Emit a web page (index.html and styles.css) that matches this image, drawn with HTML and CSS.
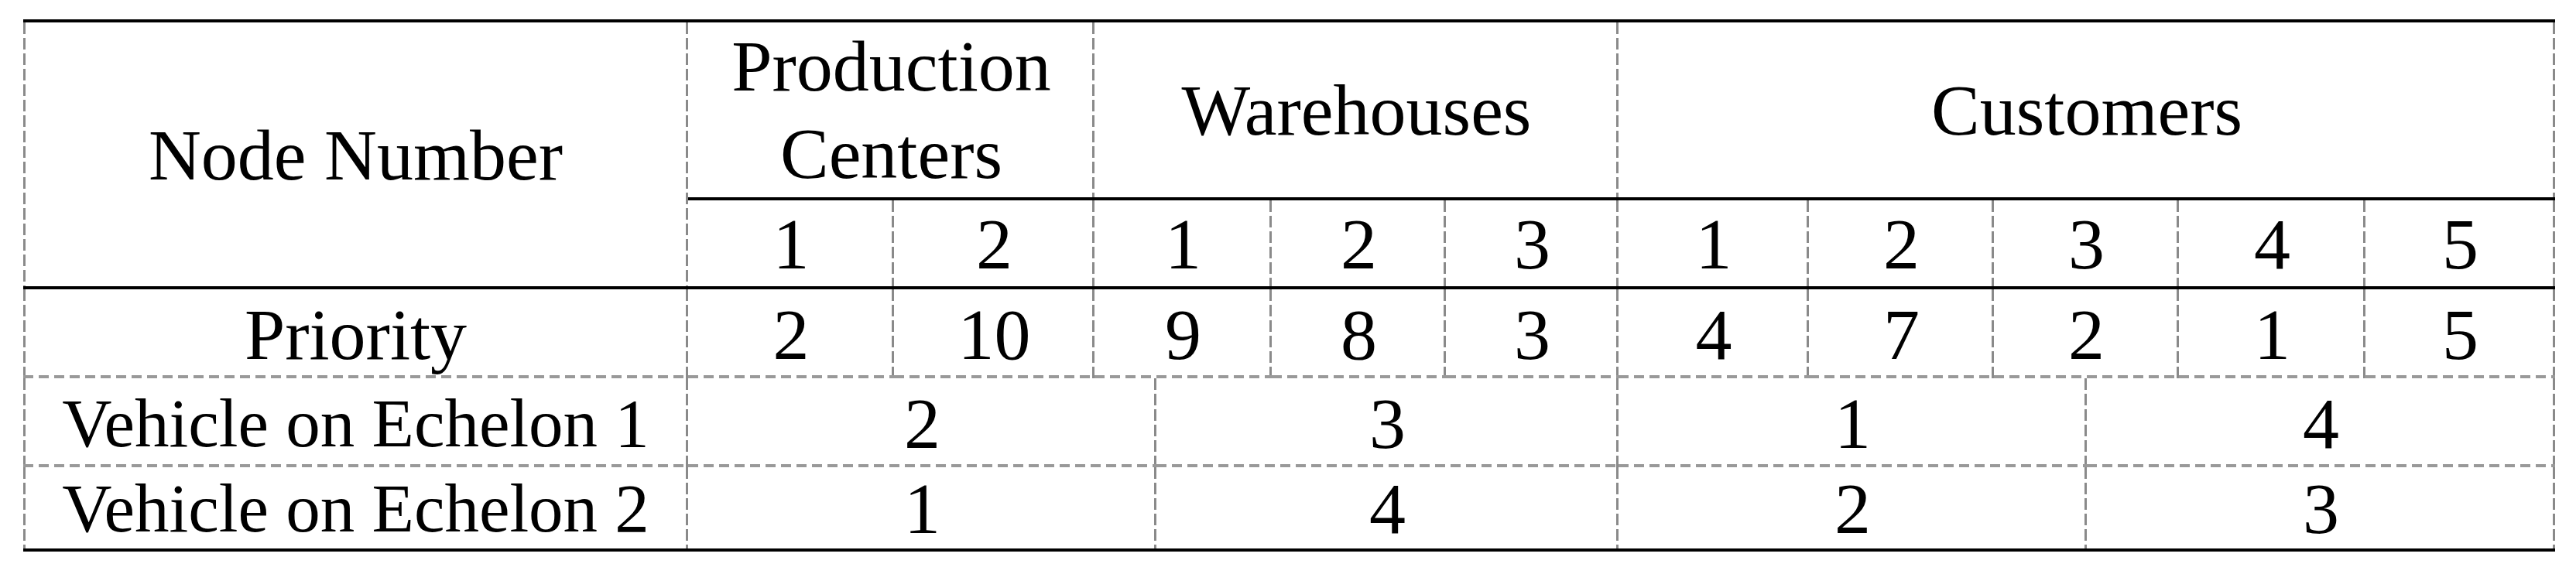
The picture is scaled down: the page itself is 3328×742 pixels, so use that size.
FILE: index.html
```html
<!DOCTYPE html>
<html lang="en">
<head>
<meta charset="utf-8">
<title>Node priorities and vehicles</title>
<link rel="stylesheet" href="styles.css">
</head>
<body>
<table class="grid">
  <colgroup>
    <col class="c-label">
    <col class="c-pc1">
    <col class="c-pc2">
    <col class="c-w1a">
    <col class="c-w1b">
    <col class="c-w2">
    <col class="c-w3">
    <col class="c-cu1">
    <col class="c-cu2">
    <col class="c-cu3a">
    <col class="c-cu3b">
    <col class="c-cu4">
    <col class="c-cu5">
  </colgroup>
  <tbody>
    <tr class="r-group">
      <td class="label head-bottom" rowspan="2">Node Number</td>
      <td class="group two-line" colspan="2">Production<br>Centers</td>
      <td class="group" colspan="4">Warehouses</td>
      <td class="group" colspan="6">Customers</td>
    </tr>
    <tr class="r-sub">
      <td class="head-bottom">1</td>
      <td class="head-bottom">2</td>
      <td class="head-bottom" colspan="2">1</td>
      <td class="head-bottom">2</td>
      <td class="head-bottom">3</td>
      <td class="head-bottom">1</td>
      <td class="head-bottom">2</td>
      <td class="head-bottom" colspan="2">3</td>
      <td class="head-bottom">4</td>
      <td class="head-bottom">5</td>
    </tr>
    <tr class="r-data">
      <td class="label row-sep">Priority</td>
      <td class="row-sep">2</td>
      <td class="row-sep">10</td>
      <td class="row-sep" colspan="2">9</td>
      <td class="row-sep">8</td>
      <td class="row-sep">3</td>
      <td class="row-sep">4</td>
      <td class="row-sep">7</td>
      <td class="row-sep" colspan="2">2</td>
      <td class="row-sep">1</td>
      <td class="row-sep">5</td>
    </tr>
    <tr class="r-data">
      <td class="label vehicle row-sep">Vehicle on Echelon 1</td>
      <td class="row-sep" colspan="3">2</td>
      <td class="row-sep" colspan="3">3</td>
      <td class="row-sep" colspan="3">1</td>
      <td class="row-sep" colspan="3">4</td>
    </tr>
    <tr class="r-last">
      <td class="label vehicle">Vehicle on Echelon 2</td>
      <td colspan="3">1</td>
      <td colspan="3">4</td>
      <td colspan="3">2</td>
      <td colspan="3">3</td>
    </tr>
  </tbody>
</table>
</body>
</html>
```
FILE: styles.css
```css
html, body {
  margin: 0;
  padding: 0;
  background: #ffffff;
}

body {
  font-family: "Liberation Serif", "Times New Roman", serif;
  color: #000000;
}

.grid {
  border-collapse: separate;
  border-spacing: 0;
  table-layout: fixed;
  width: 3271px;
  margin: 25px 0 0 30px;
  border-top: 4px solid #000000;
  border-bottom: 4px solid #000000;
}

.c-label { width: 859px; }
.c-pc1 { width: 266px; }
.c-pc2 { width: 259px; }
.c-w1a { width: 80px; }
.c-w1b { width: 149px; }
.c-w2 { width: 225px; }
.c-w3 { width: 223px; }
.c-cu1 { width: 246px; }
.c-cu2 { width: 239px; }
.c-cu3a { width: 120px; }
.c-cu3b { width: 119px; }
.c-cu4 { width: 241px; }
.c-cu5 { width: 245px; }

.grid td {
  padding: 0;
  border: 0;
  text-align: center;
  vertical-align: middle;
  font-size: 94px;
  line-height: 100px;
  white-space: nowrap;
  background-image: repeating-linear-gradient(to bottom, #8a8a8a 0 15px, transparent 15px 20px);
  background-position: right top;
  background-size: 3px 100%;
  background-repeat: no-repeat;
}

.grid td.label {
  background-image:
    repeating-linear-gradient(to bottom, #8a8a8a 0 15px, transparent 15px 20px),
    repeating-linear-gradient(to bottom, #8a8a8a 0 15px, transparent 15px 20px);
  background-position: right top, left top;
  background-size: 3px 100%, 3px 100%;
}

.grid td.row-sep {
  background-image:
    repeating-linear-gradient(to right, #999999 0 13px, transparent 13px 20px),
    repeating-linear-gradient(to bottom, #8a8a8a 0 15px, transparent 15px 20px);
  background-position: left bottom, right top;
  background-size: 100% 4px, 3px 100%;
}

.grid td.label.row-sep {
  background-image:
    repeating-linear-gradient(to right, #999999 0 13px, transparent 13px 20px),
    repeating-linear-gradient(to bottom, #8a8a8a 0 15px, transparent 15px 20px),
    repeating-linear-gradient(to bottom, #8a8a8a 0 15px, transparent 15px 20px);
  background-position: left bottom, right top, left top;
  background-size: 100% 4px, 3px 100%, 3px 100%;
}

.r-group { height: 230px; }
.r-sub { height: 115px; }
.r-data { height: 115px; }
.r-last { height: 105px; }

.grid td.group,
.grid td.head-bottom {
  border-bottom: 4px solid #000000;
}

.grid td.two-line {
  line-height: 113px;
}

.grid td.vehicle {
  font-size: 89px;
}
```
